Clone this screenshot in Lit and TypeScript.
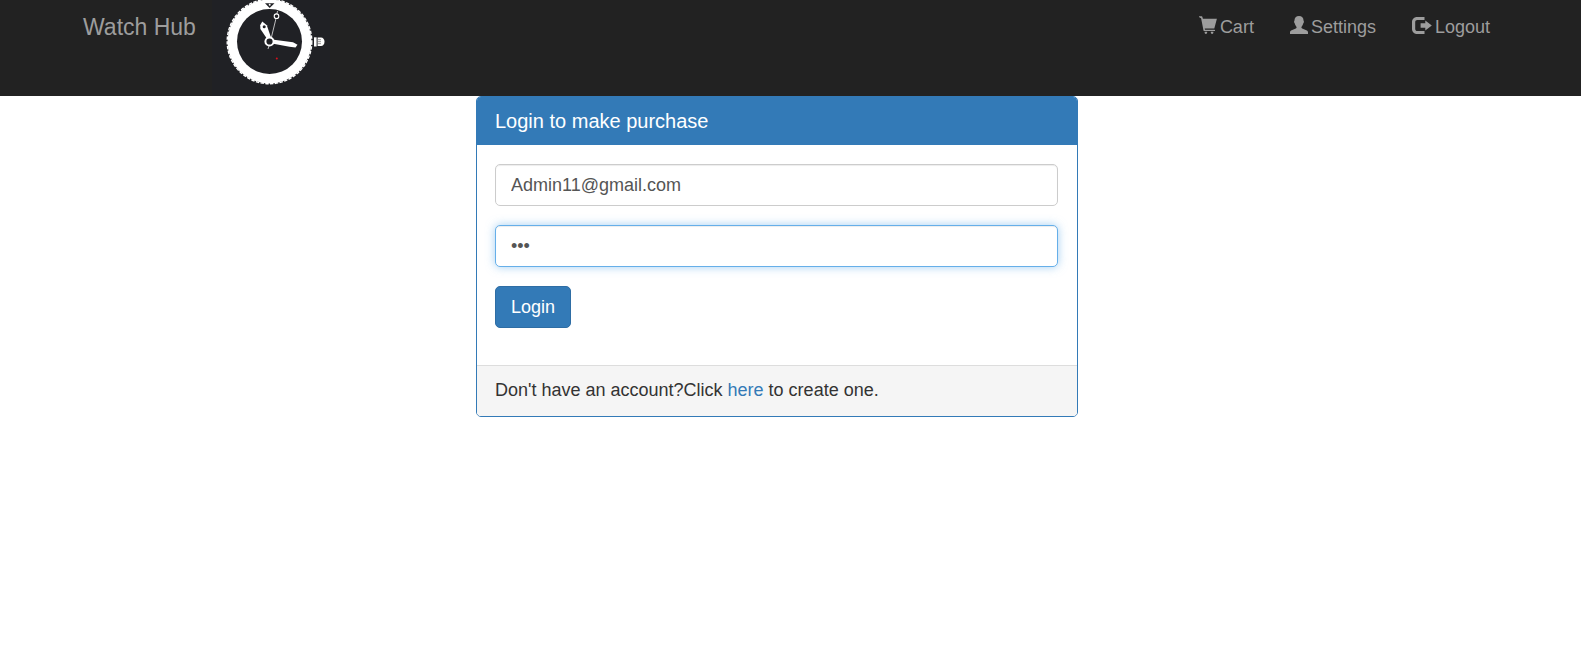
import { LitElement, html, css, svg } from "lit";
import { customElement, state } from "lit/decorators.js";

const cartIcon = svg`<svg class="icon" viewBox="0 0 18 18" aria-hidden="true">
  <path d="M0 .3h2.700c.4 0 .6.2.7.6l.5 1.900h14l-2.600 9.600H5.700l.3 1.300h9.400c.5 0 .7.3.7.7s-.3.7-.7.7H5.300c-.4 0-.7-.2-.8-.6L2.100 2.300.6 1.600C.1 1.400 0 1 0 .3z"/>
  <path d="M5.600 15.800h2.600v.8a1.300 1.300 0 0 1-2.600 0zM11.800 15.800h2.600v.8a1.300 1.300 0 0 1-2.600 0z"/>
</svg>`;

const userIcon = svg`<svg class="icon" viewBox="0 0 18 18" aria-hidden="true">
  <path d="M0 18v-1.700c0-.8.4-1.400 1.100-1.700l4.700-2.200c.6-.3.8-.7.8-1.200 0-.5-.3-.8-.7-1.300-.6-.7-.9-1.500-1.100-2.500-.5-.3-.7-.9-.7-1.600 0-.5.1-.9.400-1.200C4.300 1.700 6.200 0 9 0s4.700 1.700 4.500 4.600c.3.300.4.700.4 1.200 0 .7-.2 1.300-.7 1.600-.2 1-.5 1.800-1.100 2.500-.4.500-.7.800-.7 1.300 0 .5.200.9.800 1.200l4.700 2.200c.7.300 1.100.9 1.100 1.700V18z"/>
</svg>`;

const logoutIcon = svg`<svg class="icon wide" viewBox="0 0 20 18" aria-hidden="true">
  <path d="M12.500 1H5C2.200 1 0 3.200 0 6v7c0 2.800 2.200 5 5 5h7.500v-3H5.300C4.100 15 3.200 14.100 3.200 12.900V6.100C3.200 4.900 4.100 4 5.300 4h7.200z"/>
  <path d="M13.300 4.500 19.800 9.500 13.300 14.500V11.700H8.600V7.300h4.700z"/>
</svg>`;

const watchLogo = svg`<svg class="logo" viewBox="0 0 118 96" role="img" aria-label="Watch">
  <rect width="118" height="96" fill="#202125"/>
  <circle cx="57.500" cy="41.500" r="42" fill="#fff"/>
  <circle cx="57.500" cy="41.500" r="42.300" fill="none" stroke="#fff" stroke-width="1.400" stroke-dasharray="3.400 1.400"/>
  <circle cx="57.500" cy="41.500" r="32.500" fill="#202125"/>
  <path d="M53 3.200h9.500L57.700 8z" fill="#202125"/>
  <circle cx="57.700" cy="4.700" r="1" fill="#fff"/>
  <path d="M56 49 58.500 41 64 18.500 65.500 11" stroke="#e4e4e4" stroke-width=".8" fill="none"/>
  <circle cx="64.500" cy="16.200" r="2.300" fill="#202125" stroke="#fff" stroke-width="1.100"/>
  <path d="M50.300 21.500 54.800 25.300 59 37.500 55.500 39.500 48.400 29 48.200 25.200z" fill="#fff"/>
  <circle cx="52.200" cy="26.800" r="1.500" fill="#202125"/>
  <path d="M60 39.600 81 42.300 85.500 44.800 83.500 47.400 77.500 46.800 60 43.400z" fill="#fff"/>
  <circle cx="57.500" cy="41.500" r="4.100" fill="#202125" stroke="#fff" stroke-width="2"/>
  <circle cx="64.800" cy="58.500" r="1" fill="#d8101c"/>
  <rect x="102" y="37.300" width="2.600" height="9.200" fill="#fff"/>
  <path d="M105.600 37.500h3.400c2 0 3.500 1.900 3.500 4.300s-1.500 4.300-3.500 4.300h-3.400z" fill="#fff"/>
  <path d="M105.500 39.700h3.500M105.500 41.700h3.500M105.500 43.700h3.500" stroke="#777" stroke-width=".8"/>
</svg>`;

@customElement("site-header")
class SiteHeader extends LitElement {
  static styles = css`
    :host {
      display: block;
      background: #222;
    }
    .bar {
      display: flex;
      flex-wrap: wrap;
      justify-content: space-between;
      align-items: flex-start;
      padding: 0 91px 0 83px;
    }
    a {
      color: #9d9d9d;
      text-decoration: none;
    }
    a:hover {
      color: #fff;
    }
    .brand {
      display: flex;
      gap: 16px;
      font-size: 23px;
      line-height: 24px;
    }
    .name {
      padding-top: 15px;
    }
    .logo {
      display: block;
      width: 118px;
      height: 96px;
    }
    .links {
      display: flex;
      gap: 36px;
      margin: 0;
      padding: 15px 0 0;
      list-style: none;
      font-size: 18px;
      line-height: 24px;
    }
    .link {
      display: flex;
      gap: 3px;
    }
    .icon {
      width: 18px;
      height: 18px;
      margin-top: 1px;
      fill: currentColor;
    }
    .wide {
      width: 20px;
    }
  `;

  private links = [
    { label: "Cart", icon: cartIcon },
    { label: "Settings", icon: userIcon },
    { label: "Logout", icon: logoutIcon },
  ];

  render() {
    return html`
      <nav class="bar">
        <a class="brand" href="#"><span class="name">Watch Hub</span>${watchLogo}</a>
        <ul class="links">
          ${this.links.map(
            (l) => html`<li><a class="link" href="#">${l.icon}<span>${l.label}</span></a></li>`
          )}
        </ul>
      </nav>
    `;
  }
}

@customElement("login-panel")
class LoginPanel extends LitElement {
  static styles = css`
    :host {
      display: block;
    }
    .panel {
      background: #fff;
      border: 1px solid #337ab7;
      border-radius: 5px;
      overflow: hidden;
    }
    .heading {
      margin: 0;
      padding: 12px 18px;
      background: #337ab7;
      color: #fff;
      font-size: 20px;
      font-weight: 400;
      line-height: 24px;
    }
    .form {
      display: flex;
      flex-direction: column;
      align-items: flex-start;
      gap: 19px;
      padding: 19px 19px 37px 18px;
    }
    .field,
    .submit {
      box-sizing: border-box;
      height: 42px;
      padding: 0 15px;
      border: 1px solid #ccc;
      border-radius: 5px;
      font-family: inherit;
      font-size: 18px;
      line-height: 24px;
    }
    .field {
      width: 100%;
      color: #555;
      background: #fff;
      outline: none;
      box-shadow: inset 0 1px 1px rgba(0, 0, 0, 0.075);
    }
    .active,
    .field:focus {
      border-color: #66afe9;
      box-shadow: inset 0 1px 1px rgba(0, 0, 0, 0.075), 0 0 10px rgba(102, 175, 233, 0.6);
    }
    .submit {
      color: #fff;
      background: #337ab7;
      border-color: #2e6da4;
      cursor: pointer;
    }
    .footer {
      padding: 12px 18px 14px;
      background: #f5f5f5;
      border-top: 1px solid #ddd;
      line-height: 24px;
    }
    .footer a {
      color: #337ab7;
      text-decoration: none;
    }
  `;

  @state() private email = "Admin11@gmail.com";
  @state() private password = "123";

  render() {
    return html`
      <section class="panel">
        <h1 class="heading">Login to make purchase</h1>
        <form class="form" @submit=${(e: Event) => e.preventDefault()}>
          <input class="field" type="email" aria-label="Email" .value=${this.email} />
          <input class="field active" type="password" aria-label="Password" .value=${this.password} />
          <button class="submit" type="submit">Login</button>
        </form>
        <div class="footer">Don't have an account?Click <a href="#">here</a> to create one.</div>
      </section>
    `;
  }
}

@customElement("app-root")
class AppRoot extends LitElement {
  static styles = css`
    :host {
      display: block;
      min-height: 100vh;
      background: #fff;
      color: #333;
      font-family: "Liberation Sans", Arial, sans-serif;
      font-size: 18px;
    }
    .content {
      display: flex;
      justify-content: center;
      padding-right: 27px;
    }
    .login {
      flex: 0 1 602px;
    }
  `;

  render() {
    return html`
      <site-header></site-header>
      <main class="content"><login-panel class="login"></login-panel></main>
    `;
  }
}
